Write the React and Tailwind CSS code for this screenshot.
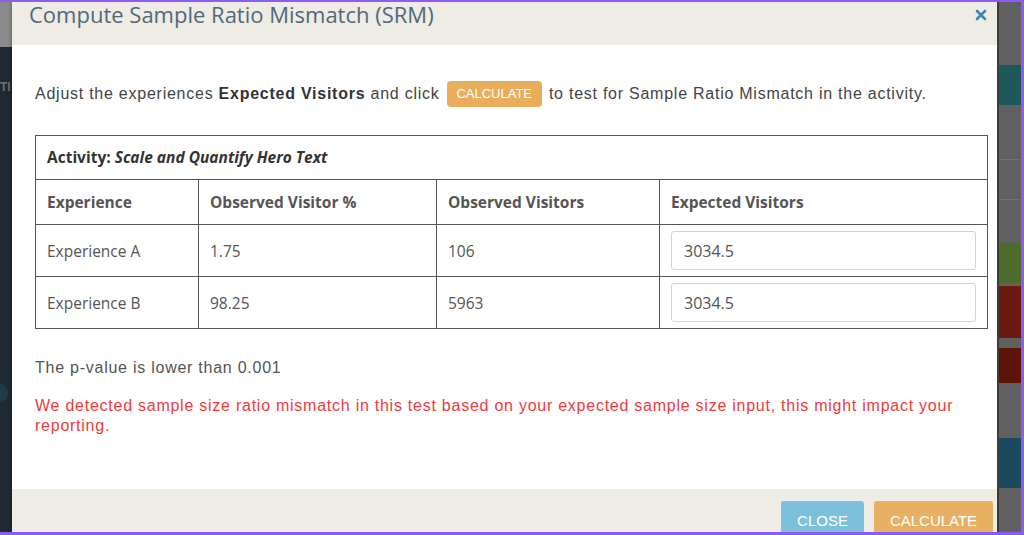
import React from "react";

const sans = { fontFamily: '"Liberation Sans", Arial, sans-serif' };
const open = { fontFamily: '"Open Sans", "Noto Sans", sans-serif' };

function Cell({ children, className = "" }) {
  return (
    <td className={"border border-[#555] px-[11px] pt-[2px] text-[15.5px] text-[#555] " + className}>
      {children}
    </td>
  );
}

export default function App() {
  return (
    <div className="w-[1024px] h-[535px] overflow-hidden border-t-[2px] border-r-[3px] border-b-[3px] border-[#8b5cf6] flex bg-[#5c5c5c]">
      {/* left background strip */}
      <div className="w-[12px] flex flex-col shrink-0">
        <div className="h-[45px] bg-[#8a8a8a]"></div>
        <div className="flex-1 bg-[#1f2a33] flex flex-col items-start">
          <div className="mt-[34px] text-[12px] leading-none text-[#6b7278] font-bold" style={sans}>TI</div>
          <div className="mt-[290px] -ml-[12px] w-[20px] h-[20px] rounded-full bg-[#1d3c48]"></div>
        </div>
      </div>

      {/* modal */}
      <div className="w-[985px] shrink-0 flex flex-col bg-white shadow-[0_0_4px_rgba(0,0,0,0.4)]">
        <div className="h-[43px] bg-[#efebe5] flex items-start justify-between pl-[17px] pr-[10px]">
          <div className="text-[22px] leading-[28px] text-[#4e6a7b] -mt-[2px]" style={open}>
            Compute Sample Ratio Mismatch (SRM)
          </div>
          <svg width="12" height="12" viewBox="0 0 12 12" className="mt-[7px]">
            <path d="M2 2 L10 10 M10 2 L2 10" stroke="#3b88b8" strokeWidth="2.6" strokeLinecap="round" />
          </svg>
        </div>

        <div className="flex-1 px-[23px] pt-[36px]">
          <div className="flex items-center text-[16px] tracking-[0.75px] text-[#444]" style={sans}>
            <span>Adjust the experiences&nbsp;</span>
            <b className="text-[#333]">Expected Visitors</b>
            <span>&nbsp;and click&nbsp;</span>
            <span className="inline-flex items-center justify-center w-[95px] h-[26px] rounded-[4px] bg-[#e8ae5c] text-white text-[13px] tracking-normal mx-[2px]">CALCULATE</span>
            <span>&nbsp;to test for Sample Ratio Mismatch in the activity.</span>
          </div>

          <table className="mt-[28px] w-[953px] border-collapse border border-[#555]" style={open}>
            <tbody>
              <tr className="h-[44px]">
                <td colSpan={4} className="border border-[#555] px-[11px] text-[15.5px] text-[#333] font-bold">
                  Activity: <i>Scale and Quantify Hero Text</i>
                </td>
              </tr>
              <tr className="h-[45px]">
                <Cell className="w-[163px] font-bold text-[#333]">Experience</Cell>
                <Cell className="w-[238px] font-bold text-[#333]">Observed Visitor %</Cell>
                <Cell className="w-[223px] font-bold text-[#333]">Observed Visitors</Cell>
                <Cell className="font-bold text-[#333]">Expected Visitors</Cell>
              </tr>
              {[
                ["Experience A", "1.75", "106"],
                ["Experience B", "98.25", "5963"],
              ].map((r) => (
                <tr key={r[0]} className="h-[52px]">
                  <Cell>{r[0]}</Cell>
                  <Cell>{r[1]}</Cell>
                  <Cell>{r[2]}</Cell>
                  <td className="border border-[#555] px-[11px]">
                    <div className="h-[39px] w-[305px] border border-[#d4d4d4] rounded-[3px] flex items-center px-[12px] pt-[1px] text-[16px] text-[#555]">
                      3034.5
                    </div>
                  </td>
                </tr>
              ))}
            </tbody>
          </table>

          <div className="mt-[27px] text-[16px] tracking-[0.75px] text-[#555]" style={sans}>The p-value is lower than 0.001</div>
          <div className="mt-[16px] text-[16px] tracking-[0.75px] leading-[20px] text-[#ee3b3b] w-[945px]" style={sans}>
            We detected sample size ratio mismatch in this test based on your expected sample size input, this might impact your reporting.
          </div>
        </div>

        <div className="h-[43px] bg-[#efebe5] flex justify-end items-start gap-[10px] pr-[4px] pt-[12px]">
          <div className="w-[83px] h-[40px] rounded-[3px] bg-[#7dc0dc] text-white text-[15px] flex items-center justify-center" style={sans}>CLOSE</div>
          <div className="w-[119px] h-[40px] rounded-[3px] bg-[#e8b062] text-white text-[15px] flex items-center justify-center" style={sans}>CALCULATE</div>
        </div>
      </div>

      {/* right background strip */}
      <div className="flex-1 flex flex-col bg-[#606060] border-l-[2px] border-[#3c3c3c]">
        <div className="h-[63px]"></div>
        <div className="h-[40px] bg-[#1f5858]"></div>
        <div className="h-[55px] border-b border-[#707070]"></div>
        <div className="h-[40px] border-b border-[#707070]"></div>
        <div className="h-[43px]"></div>
        <div className="h-[40px] bg-[#4d6b2c]"></div>
        <div className="h-[3px]"></div>
        <div className="h-[52px] bg-[#6a1a0f]"></div>
        <div className="h-[10px]"></div>
        <div className="h-[35px] bg-[#5c1508]"></div>
        <div className="h-[55px]"></div>
        <div className="h-[50px] bg-[#1b4a5f]"></div>
      </div>
    </div>
  );
}
